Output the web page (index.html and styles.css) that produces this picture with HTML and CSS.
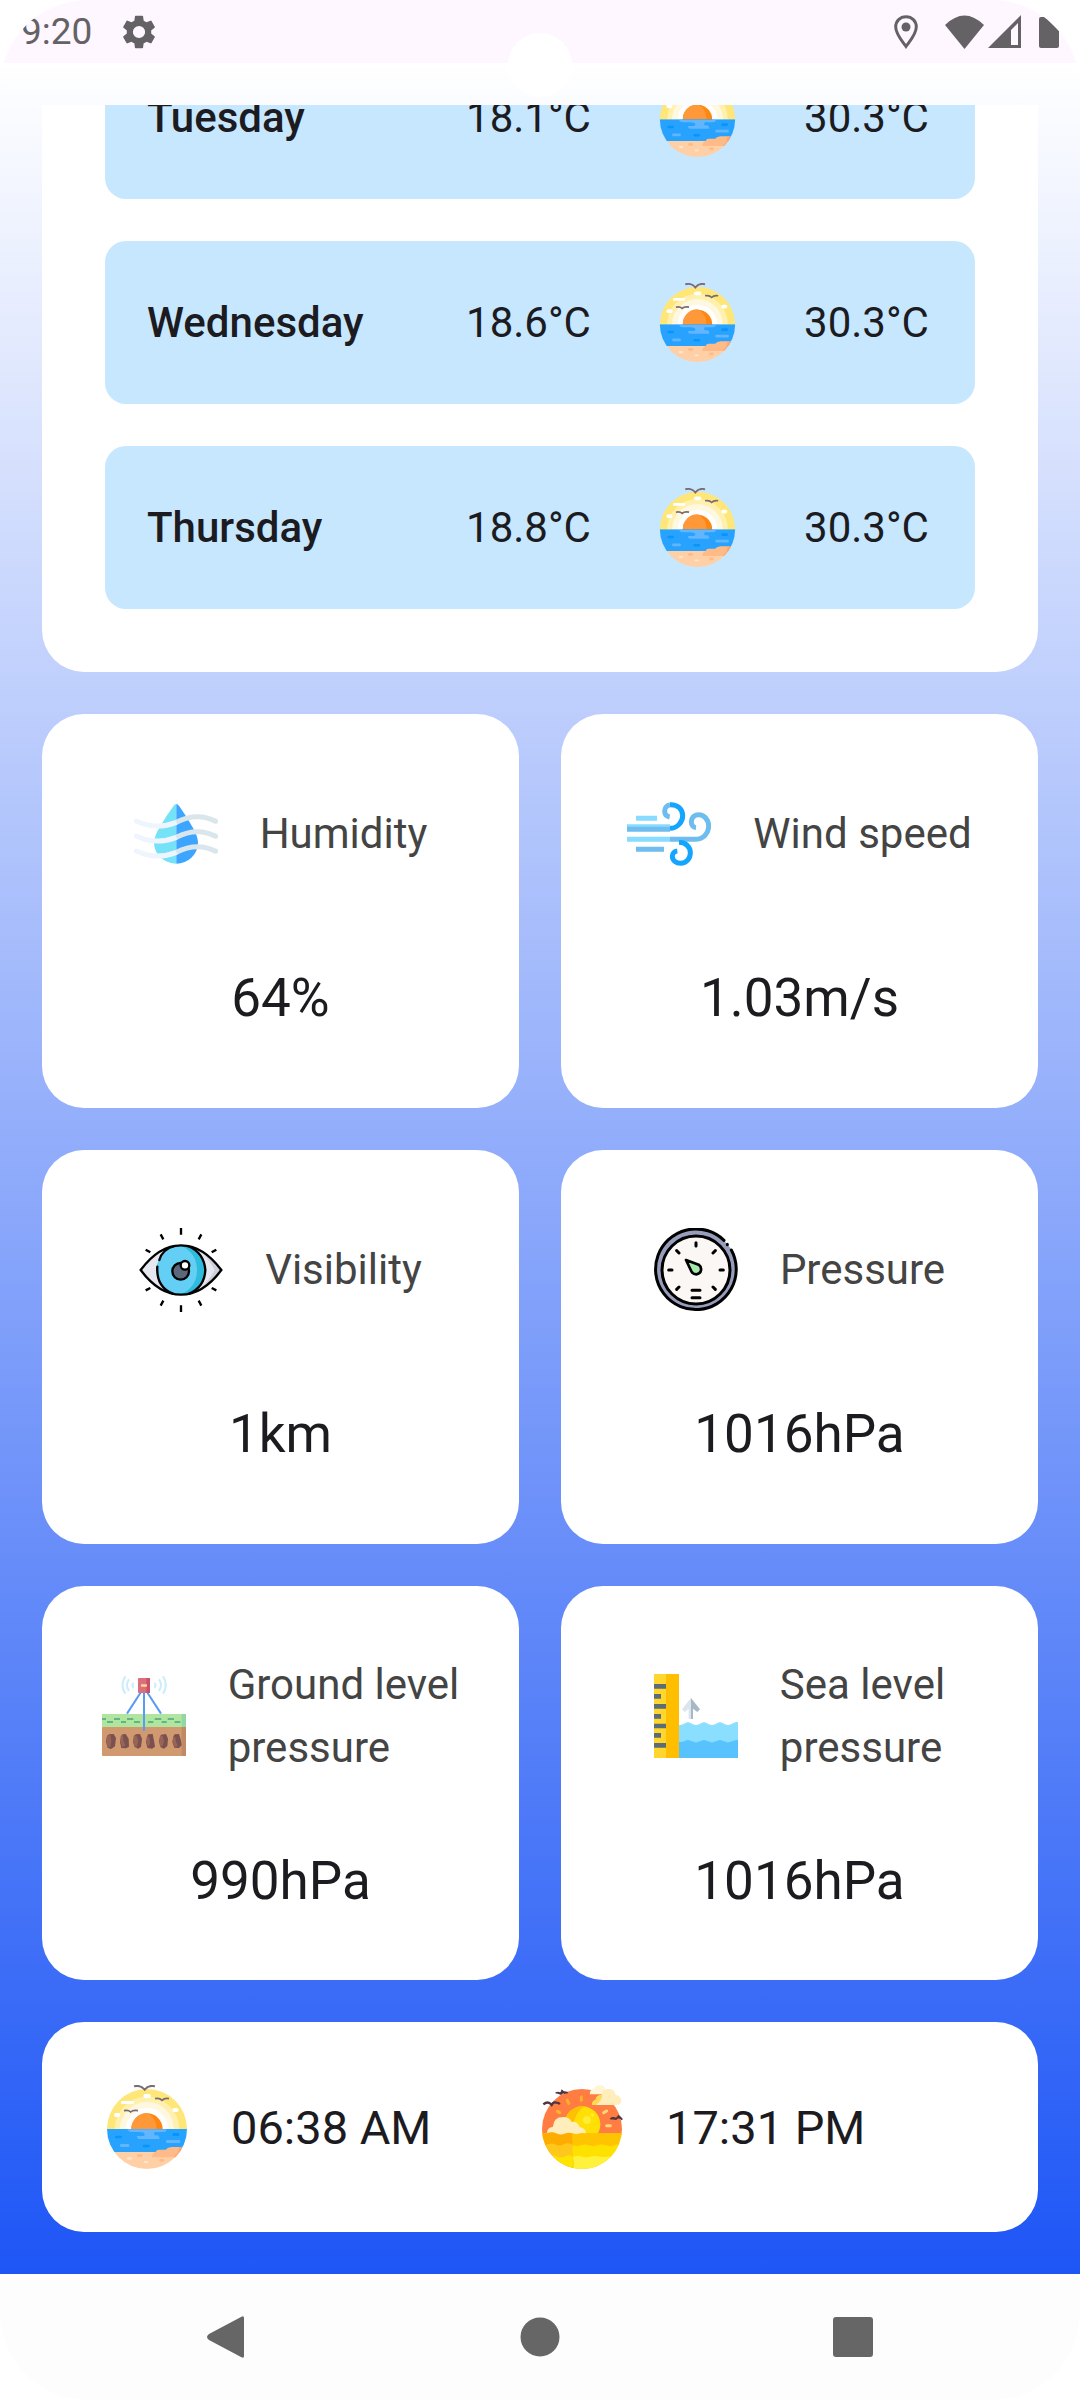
FILE: index.html
```html
<!DOCTYPE html>
<html lang="en">
<head>
<meta charset="utf-8">
<meta name="viewport" content="width=device-width, initial-scale=1">
<title>Weather</title>
<link rel="stylesheet" href="styles.css">
</head>
<body>
<svg class="sprite" aria-hidden="true">
  <defs>
    <clipPath id="sunrise-clip"><circle cx="171" cy="177" r="120"/></clipPath>
    <clipPath id="sunset-clip"><circle cx="156" cy="177" r="120"/></clipPath>
    <clipPath id="sunset-sun-clip"><circle cx="157" cy="163" r="54"/></clipPath>
  </defs>
  <symbol id="sunrise" viewBox="45 45 252 252">
    <g clip-path="url(#sunrise-clip)">
      <rect x="45" y="50" width="252" height="130" fill="#fee679"/>
      <circle cx="171" cy="177" r="97" fill="#fff0ae"/>
      <circle cx="171" cy="177" r="81" fill="#fff8e0"/>
      <circle cx="171" cy="177" r="63" fill="#fff"/>
      <circle cx="171" cy="177" r="47" fill="#ff870f"/>
      <path d="M124 177a47 47 0 0 1 47-48C190 137 200 155 199 177z" fill="#ff9838"/>
      <rect x="45" y="177" width="252" height="70" fill="#27a3ff"/>
      <path d="M112 178h117v4q-2 4-8 4h-27q-4 6 0 10h10q4 3 4 7v4h-62q-6-2-5-9h19q6-2 4-6-2-6-14-6h-28q-8 0-10-8z" fill="#62b5ff"/>
      <rect x="228" y="210" width="43" height="9" rx="3" fill="#62b5ff"/>
      <rect x="90" y="222" width="28" height="9" rx="4" fill="#62b5ff"/>
      <g fill="#0794fb"><rect x="75" y="197" width="21" height="8" rx="4"/><rect x="247" y="189" width="21" height="9" rx="4"/><rect x="158" y="224" width="21" height="8" rx="4"/></g>
      <rect x="45" y="246" width="252" height="55" fill="#ffd0a6"/>
      <path d="M186 260q1-10 11-14 2-7 10-7h20q6-8 18-8h26l10 10-20 21h-75z" fill="#ffbb87"/>
      <path d="M266 231q4 14-14 30h20l14-30z" fill="#f9a66f"/>
      <g fill="#ffbb87"><rect x="141" y="252" width="16" height="9" rx="4"/><rect x="208" y="267" width="15" height="8" rx="4"/></g>
      <g fill="#ffe6c9"><rect x="111" y="262" width="14" height="7" rx="3"/><rect x="162" y="273" width="13" height="6" rx="3"/></g>
      <g fill="#fff"><rect x="93" y="93" width="39" height="9" rx="3"/><rect x="160" y="72" width="23" height="12" rx="6"/><rect x="72" y="129" width="19" height="12" rx="6"/><rect x="247" y="114" width="19" height="12" rx="6"/></g>
    </g>
    <g fill="none" stroke="#7a6c76" stroke-width="5">
      <path d="M132 49q20-5 32 10 12-15 31-10" stroke-width="6"/>
      <path d="M195 86q14-3 21 5 8-8 21-5M102 122q13-3 20 4 7-7 22-4"/>
    </g>
  </symbol>
  <symbol id="sunset" viewBox="30 45 252 252">
    <g clip-path="url(#sunset-clip)">
      <rect x="30" y="45" width="252" height="150" fill="#ff7d43"/>
      <circle cx="157" cy="163" r="54" fill="#ffdf05"/>
      <path clip-path="url(#sunset-sun-clip)" d="M90 105h78q-34 22-38 60v30H90z" fill="#ffbf02"/>
      <circle cx="171" cy="150" r="12" fill="#ffec35"/><circle cx="187" cy="135" r="5" fill="#ffec35"/>
      <g stroke-width="9" stroke-linecap="round" stroke="#ffb326"><path d="M154 80v11M112 91l4 9M82 124l7 4"/><path d="M221 128l9-5M230 167h11" stroke="#ffd77a"/></g>
      <rect x="30" y="189" width="252" height="110" fill="#ffc400"/>
      <path d="M30 185q12 8 23 3t26 2 26 0 22 0v110H30z" fill="#ffac00"/>
      <path d="M127 225q13 6 25 1t25 0 25 0 25 0 25 0 30 0v75H127z" fill="#ffe100"/>
      <path d="M30 222q12 6 24 1t24 1 24-1 28 3q-8 20 0 35v40H30z" fill="#ffc71c"/>
      <path d="M30 258q16 6 28 1t24 1 24-1 22 1v40H30z" fill="#ffe400"/>
      <path d="M128 262q12-8 25-3t26 1 26-1 26 1 26-1 30-1v45H128q8-20 0-42z" fill="#fff23c"/>
    </g>
    <path d="M51 190q0-18 18-20 1-29 31-29 19 0 25 15 16-3 24 15 17 2 19 19-10-2-18 0-10 4-22 0t-25 1-25-1-27 0z" fill="#ffeebc"/>
    <path d="M180 73q-3-14 13-16 2-12 17-12 12 0 16 11 16 1 17 17z" fill="#fff5d5"/>
    <path d="M187 105q-2-12 10-16 1-12 17-14 6-20 23-18 17 0 20 17 16 2 17 19-1 12-14 12z" fill="#ffeebc"/>
    <path d="M187 105q-2-12 10-16 1-14 20-14-2 18-19 30z" fill="#ffd954"/>
    <g fill="none" stroke="#50343f" stroke-width="7"><path d="M40 103q12-10 21-2l4 4q5-10 14-7 8 0 10 5"/><path d="M77 69q10-4 16 3 8-10 20-3M82 68l10 4 4-10 10 9" stroke-width="5"/><path d="M241 147q9-7 17 0 9-9 19 2M245 145l13 2 8-9 8 7" stroke-width="5"/></g>
  </symbol>
</svg>

<div class="screen">
  <header class="status-bar">
    <div class="status-group">
      <span class="clock">9:20</span>
      <svg class="status-icon" viewBox="2 2 20 20" aria-hidden="true"><path d="M19.14 12.94c.04-.3.06-.61.06-.94 0-.32-.02-.64-.07-.94l2.03-1.58a.49.49 0 0 0 .12-.61l-1.92-3.32a.488.488 0 0 0-.59-.22l-2.39.96c-.5-.38-1.03-.7-1.62-.94l-.36-2.54a.484.484 0 0 0-.48-.41h-3.84c-.24 0-.43.17-.47.41l-.36 2.54c-.59.24-1.13.57-1.62.94l-2.39-.96c-.22-.08-.47 0-.59.22L2.74 8.87c-.12.21-.08.47.12.61l2.03 1.58c-.05.3-.09.63-.09.94s.02.64.07.94l-2.03 1.58a.49.49 0 0 0-.12.61l1.92 3.32c.12.22.37.29.59.22l2.39-.96c.5.38 1.03.7 1.62.94l.36 2.54c.05.24.24.41.48.41h3.84c.24 0 .44-.17.47-.41l.36-2.54c.59-.24 1.13-.56 1.62-.94l2.39.96c.22.08.47 0 .59-.22l1.92-3.32c.12-.22.07-.47-.12-.61l-2.01-1.58zM12 15.6A3.6 3.6 0 1 1 12 8.400a3.600 3.600 0 0 1 0 7.200z"/></svg>
    </div>
    <div class="status-group status-right">
      <svg class="pin-icon" viewBox="0 0 24 34" aria-hidden="true"><path d="M12 1.700C6 1.700 1.700 6 1.700 12c0 7 6 13.500 10.300 19.500C16.300 25.500 22.300 19 22.300 12 22.300 6 18 1.700 12 1.700z" fill="none" stroke="#656266" stroke-width="3"/><circle cx="12" cy="12" r="4.500"/></svg>
      <svg class="wifi-icon" viewBox="0 0 39 34" aria-hidden="true"><path d="M0 10Q19.500-9 39 10L19.500 34z"/></svg>
      <svg class="signal-icon" viewBox="0 0 33 33" aria-hidden="true"><path d="M33 0v33H0zM30 8l-7 7v15h7z" fill-rule="evenodd"/></svg>
      <svg class="battery-icon" viewBox="0 0 20 32" aria-hidden="true"><path d="M2 1h4l14 14v15q0 2-2 2H2q-2 0-2-2V3q0-2 2-2z"/></svg>
    </div>
  </header>
  <div class="camera"></div>

  <main class="weather">
    <div class="scroller">
      <div class="content">
        <section class="card forecast">
          <div class="day"><span class="day-name">Tuesday</span><span class="temp">18.1°C</span><svg class="day-icon" aria-hidden="true"><use href="#sunrise"/></svg><span class="temp">30.3°C</span></div>
          <div class="day"><span class="day-name">Wednesday</span><span class="temp">18.6°C</span><svg class="day-icon" aria-hidden="true"><use href="#sunrise"/></svg><span class="temp">30.3°C</span></div>
          <div class="day"><span class="day-name">Thursday</span><span class="temp">18.8°C</span><svg class="day-icon" aria-hidden="true"><use href="#sunrise"/></svg><span class="temp">30.3°C</span></div>
        </section>

        <section class="tiles">
          <div class="card tile">
            <div class="tile-head">
              <svg class="tile-icon" viewBox="54 36 252 252" aria-hidden="true">
                <path d="M181 72q-5 0-9 7-22 30-40 61-18 28-18 48a67 63 0 0 0 67 63z" fill="#76e2f8"/>
                <path d="M181 72q4 0 9 7 21 30 39 61 17 28 17 48a65 63 0 0 1-65 63z" fill="#3ba5ff"/>
                <g fill="none" stroke-width="15" stroke-linecap="round">
                  <path id="wave-left" d="M61 123q58 28 120 4M61 168q58 28 120 4M61 213q58 28 120 4" stroke="#eff5ff"/>
                  <path d="M181 127q62-32 118-3M181 172q62-32 118-3M181 217q62-32 118-3" stroke="#d9e6ec" stroke-linecap="butt"/>
                  <path d="M298 124h1M298 169h1M298 214h1" stroke="#d9e6ec"/>
                </g>
              </svg>
              <span class="tile-label">Humidity</span>
            </div>
            <span class="tile-value">64%</span>
          </div>
          <div class="card tile">
            <div class="tile-head">
              <svg class="tile-icon" viewBox="60 36 252 252" aria-hidden="true">
                <g fill="none" stroke-width="15">
                  <path d="M60 145h129" stroke="#6fbdee"/><path d="M60 140h129M87 115h63M60 178h129" stroke="#87dcff"/>
                  <path d="M60 148h129M87 208h84M189 178h74c26 0 42-18 42-40 0-19-14-34-30-34-14 0-22 10-22 22 0 8 5 16 14 17" stroke="#6fbdee"/>
                  <path d="M189 74c-11 2-16 11-16 20 0 8 5 15 15 17" stroke="#6fbdee"/>
                  <path d="M189 145c22 0 38-19 38-38 0-20-15-34-38-33M216 187c20 0 34 14 34 31s-12 32-29 32c-14 0-25-9-25-21 0-8 6-15 15-16" stroke="#14a6ff"/>
                </g>
              </svg>
              <span class="tile-label">Wind speed</span>
            </div>
            <span class="tile-value">1.03m/s</span>
          </div>
          <div class="card tile">
            <div class="tile-head">
              <svg class="tile-icon" viewBox="36 54 252 252" aria-hidden="true">
                <path d="M41 180Q96 106 162 106t121 74q-55 74-121 74T41 180z" fill="#e6e7ef"/>
                <path d="M216 122q36 14 67 58-31 44-67 58 28-22 47-58-18-36-47-58z" fill="#cdd2da"/>
                <circle cx="162" cy="180" r="73" fill="#2fbbdc"/>
                <path d="M162 107q48 22 48 73t-48 73a73 73 0 0 1 0-146z" fill="#64cff4"/>
                <g fill="none" stroke="#000" stroke-width="7" stroke-linecap="round">
                  <path d="M41 180Q96 106 162 106t121 74q-55 74-121 74T41 180z"/>
                  <path d="M97 150Q106 118 142 108M91 170q-4 60 46 81M183 108q48 20 52 72-2 50-48 71"/>
                  <circle cx="161" cy="184" r="25" fill="#5b677a"/>
                  <circle cx="174" cy="166" r="13" fill="#fff"/>
                </g>
                <path d="M162 54v20M162 286v20M101 73l8 15M223 73l-8 15M101 287l8-15M223 287l-8-15M56 119l14 8M268 119l-14 8M56 241l14-7M268 241l-14-7" stroke="#000" stroke-width="7"/>
              </svg>
              <span class="tile-label">Visibility</span>
            </div>
            <span class="tile-value">1km</span>
          </div>
          <div class="card tile">
            <div class="tile-head">
              <svg class="tile-icon" viewBox="39 54 252 252" aria-hidden="true">
                <circle cx="165" cy="180" r="111" fill="#fbf7f5" stroke="#969ebb" stroke-width="22"/>
                <g fill="none" stroke="#000" stroke-width="9" stroke-linecap="round">
                  <path d="M249 91A121 121 0 1 0 271 120"/>
                  <circle cx="165" cy="180" r="102"/>
                  <path d="M259 103v1M165 98v10M83 180h10M237 180h10M107 122l7 7M223 122l-7 7M107 238l7-7M223 238l-7-7M153 241h24M153 263h24"/>
                  <path d="M135 150l38 14q9 7 7 17-2 11-14 12-11 0-15-9z" fill="#a5e8ae" stroke-width="8" stroke-linejoin="round"/>
                </g>
              </svg>
              <span class="tile-label">Pressure</span>
            </div>
            <span class="tile-value">1016hPa</span>
          </div>
          <div class="card tile">
            <div class="tile-head">
              <svg class="tile-icon" viewBox="42 42 252 252" aria-hidden="true">
                <rect x="42" y="162" width="252" height="40" fill="#b1e59e"/><rect x="281" y="162" width="13" height="40" fill="#92d6a5"/>
                <rect x="42" y="201" width="252" height="87" rx="3" fill="#d19970"/><path d="M281 201h13v84q0 3-3 3h-10z" fill="#c28966"/>
                <path d="M42 177h12M78 177h18M117 177h19M200 177h20M239 177h19M57 186h18M99 186h15M138 186h18M180 186h16M221 186h15M260 186h17" stroke="#61b58d" stroke-width="6"/>
                <g fill="#7a5050"><path d="M63 223l14-1 7 12-3 25-12 8-10-4-5-18 3-17z"/><path d="M103 223l10-1 9 14 1 24-9 5-14-1-4-18 4-18z"/><path d="M143 223l13-1 6 14-3 24-8 6-11-5-5-15 3-17z"/><path d="M180 223l14-1 4 20 3 18-9 6-13-2-5-16 3-16z"/><path d="M219 224l15-2 6 14-2 22-10 8-10-4-5-18 3-14z"/><path d="M260 223l13-1 6 20 2 14-8 8-14-1-6-17 4-18z"/></g>
                <g fill="#986456"><path d="M58 226l10 0 2 18-3 17-8 0-4-20z"/><path d="M98 228l6-4 3 20 5 12-9 6-6-18z"/><path d="M138 226l8 2 5 14-5 20-8-6-2-14z"/><path d="M177 228l7 4 2 16-3 10-6-4-2-12z"/><path d="M216 228l8 0 4 16-4 14-8 0-2-14z"/><path d="M256 228l6 4 3 16 5 10-10 2-6-14z"/></g>
                <path d="M159 96l-42 65M177 96l42 65M168 98v115" fill="none" stroke="#579bf8" stroke-width="6"/>
                <rect x="150" y="54" width="36" height="45" rx="2" fill="#db6f7e"/><path d="M175 54h11v45h-11z" fill="#c85268"/><rect x="159" y="73" width="18" height="7" rx="2" fill="#ffda8b"/>
                <path d="M137 69q-8 7 0 14M123 58q-12 17 0 35M112 49q-17 26 0 52M199 69q8 7 0 14M213 58q12 17 0 35M225 49q17 26 0 52" fill="none" stroke="#ccecfb" stroke-width="6"/>
              </svg>
              <span class="tile-label">Ground level<br>pressure</span>
            </div>
            <span class="tile-value">990hPa</span>
          </div>
          <div class="card tile">
            <div class="tile-head">
              <svg class="tile-icon" viewBox="39 42 252 252" aria-hidden="true">
                <rect x="39" y="42" width="38" height="252" fill="#ffd62d"/><rect x="75" y="42" width="39" height="252" fill="#ffbf00"/>
                <path d="M39 79h36M39 139h36M39 198h36M39 256h36M39 109h21M39 169h21M39 226h21" stroke="#5a6c76" stroke-width="14"/>
                <path d="M114 196q12-1 18-6 9-7 18 0 15 10 30 0 9-7 18 0 15 10 30 0 9-7 18 0 15 10 30 0 7-4 15-4v60H114z" fill="#8adeff"/>
                <path d="M114 246q13 0 18-3 9-6 18 0 15 7 30 0 9-6 18 0 15 7 30 0 9-6 18 0 15 7 30 0 7-3 15-3v54H114z" fill="#58c2ff"/>
                <path d="M150 114l-27 34 8 8 12-10v31h7z" fill="#dbe5eb"/><path d="M150 114l27 34-8 8-13-10v31h-6z" fill="#a8b7c7"/>
              </svg>
              <span class="tile-label">Sea level<br>pressure</span>
            </div>
            <span class="tile-value">1016hPa</span>
          </div>
        </section>

        <section class="card sun-times">
          <div class="sun-time"><svg class="tile-icon" aria-hidden="true"><use href="#sunrise"/></svg><span>06:38 AM</span></div>
          <div class="sun-time"><svg class="tile-icon" aria-hidden="true"><use href="#sunset"/></svg><span>17:31 PM</span></div>
        </section>
      </div>
    </div>
  </main>

  <nav class="nav-bar">
    <button type="button" aria-label="Back"><svg viewBox="0 0 42 42" aria-hidden="true"><path d="M38 2v38q0 3-3 1L3 24q-4-3 0-6L35 1q3-2 3 1z"/></svg></button>
    <button type="button" aria-label="Home"><svg viewBox="0 0 42 42" aria-hidden="true"><circle cx="21" cy="21" r="19.500"/></svg></button>
    <button type="button" aria-label="Recent apps"><svg viewBox="0 0 42 42" aria-hidden="true"><rect x="1" y="1" width="40" height="40" rx="3"/></svg></button>
  </nav>
</div>
</body>
</html>
```
FILE: styles.css
```css
* { box-sizing: border-box; }

body {
  margin: 0;
  background: #fff;
  color: #1c1b1f;
  font-family: Roboto, "Liberation Sans", sans-serif;
  font-size: 42px;
  line-height: 63px;
}

svg { display: block; flex: none; }

.sprite { position: absolute; width: 0; height: 0; }

.screen {
  position: relative;
  display: flex;
  flex-direction: column;
  height: 100vh;
  overflow: hidden;
  border-radius: 88px;
}

.status-bar {
  display: flex;
  flex: none;
  align-items: center;
  justify-content: space-between;
  height: 63px;
  padding: 0 21px;
  background: #fef7ff;
  color: #656266;
  fill: #656266;
}

.status-group { display: flex; align-items: center; gap: 30px; }
.status-right { gap: 0; }
.clock { font-size: 37px; }
.status-icon { width: 34px; height: 34px; }
.pin-icon { width: 24px; height: 34px; margin-right: 27px; }
.wifi-icon { width: 39px; height: 34px; margin-right: 4px; }
.signal-icon { width: 33px; height: 33px; margin-right: 18px; }
.battery-icon { width: 20px; height: 32px; }

.camera {
  position: absolute;
  top: 33px;
  left: calc(50% - 32px);
  width: 64px;
  height: 64px;
  border-radius: 50%;
  background: #fff;
}

.weather {
  display: flex;
  flex: 1;
  flex-direction: column;
  min-height: 0;
  padding: 42px;
  background: linear-gradient(#fff, #1e56f6);
}

/* Reversed column so the list opens at its end. */
.scroller {
  display: flex;
  flex: 1;
  flex-direction: column-reverse;
  min-height: 0;
  overflow-y: auto;
  scrollbar-width: none;
}

.content { display: flex; flex: none; flex-direction: column; gap: 42px; }

.card { border-radius: 42px; background: #fff; }

.forecast { display: flex; flex-direction: column; gap: 42px; padding: 63px; }

.day {
  display: grid;
  grid-template-columns: 1fr 133px 79px 133px;
  column-gap: 63px;
  align-items: center;
  padding: 42px;
  border-radius: 21px;
  background: #c7e7ff;
}

.day-name { font-weight: 500; }
.temp { text-align: center; }
.day-icon { width: 79px; height: 79px; }

.tiles { display: grid; grid-template-columns: 1fr 1fr; gap: 42px; }

.tile {
  display: flex;
  flex-direction: column;
  align-items: center;
  justify-content: space-around;
  min-height: 394px;
  padding: 32px;
}

.tile-head { display: flex; align-items: center; gap: 42px; }
.tile-icon { width: 84px; height: 84px; }
.tile-label { color: #444; }
.tile-value { font-size: 53px; }

.sun-times {
  display: grid;
  grid-template-columns: 1fr 1fr;
  padding: 63px;
  font-size: 47px;
}

.sun-time { display: flex; align-items: center; gap: 42px; }

.nav-bar {
  display: grid;
  flex: none;
  grid-template-columns: repeat(3, 1fr);
  height: 126px;
  padding: 0 70px;
  background: #fdfdfd;
}

.nav-bar button {
  display: flex;
  align-items: center;
  justify-content: center;
  padding: 0;
  border: 0;
  background: none;
}

.nav-bar svg { width: 42px; height: 42px; fill: #666; }
```
